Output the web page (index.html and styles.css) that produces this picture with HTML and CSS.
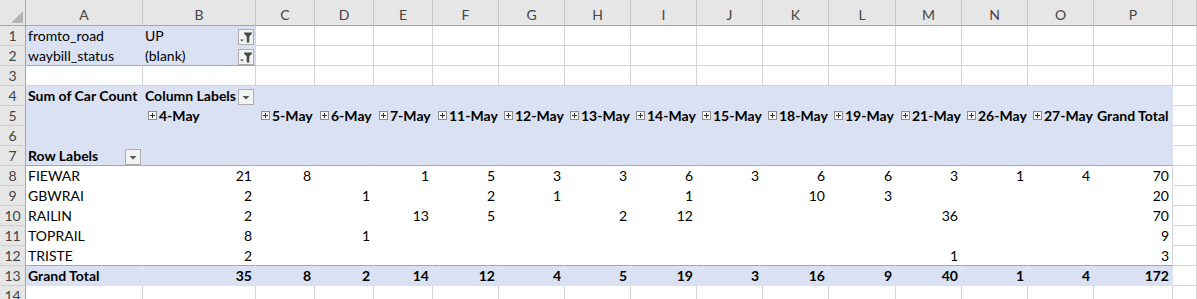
FILE: index.html
```html
<!DOCTYPE html>
<html lang="en">
<head>
    <meta charset="UTF-8">
    <title>Car Count Pivot</title>
    <link rel="stylesheet" href="styles.css">
</head>
<body>
    <table class="sheet">
        <colgroup>
            <col class="w-rh"><col class="w-a"><col class="w-b">
            <col class="w-s"><col class="w-s"><col class="w-s">
            <col class="w-m"><col class="w-m"><col class="w-m"><col class="w-m"><col class="w-m"><col class="w-m">
            <col class="w-l">
            <col class="w-m"><col class="w-m"><col class="w-m">
            <col class="w-p"><col class="w-q">
        </colgroup>
        <thead>
            <tr class="hdr">
                <th class="corner"><svg width="26" height="25" viewBox="0 0 26 25"><polygon points="23,11 23,23 11,23" fill="#b5b5b5"/></svg></th>
                <th>A</th><th>B</th><th>C</th><th>D</th><th>E</th><th>F</th><th>G</th><th>H</th>
                <th>I</th><th>J</th><th>K</th><th>L</th><th>M</th><th>N</th><th>O</th><th>P</th><th></th>
            </tr>
        </thead>
        <tbody>
            <tr>
                <td class="rh">1</td>
                <td class="pv">fromto_road</td>
                <td class="pv edge"><div class="fcell"><span>UP</span><span class="fbtn"><svg width="14" height="14" viewBox="0 0 14 14"><polygon points="1,9.5 5,9.5 3,11.5" fill="#555"/><polygon points="5,2.5 13,2.5 13,3.5 10.3,6.5 10.3,12.5 7.7,12.5 7.7,6.5 5,3.5" fill="#4a4a4a"/></svg></span></div></td>
                <td></td><td></td><td></td><td></td><td></td><td></td><td></td><td></td><td></td><td></td><td></td><td></td><td></td><td></td><td></td>
            </tr>
            <tr>
                <td class="rh">2</td>
                <td class="pv bl">waybill_status</td>
                <td class="pv bl edge"><div class="fcell"><span>(blank)</span><span class="fbtn"><svg width="14" height="14" viewBox="0 0 14 14"><polygon points="1,9.5 5,9.5 3,11.5" fill="#555"/><polygon points="5,2.5 13,2.5 13,3.5 10.3,6.5 10.3,12.5 7.7,12.5 7.7,6.5 5,3.5" fill="#4a4a4a"/></svg></span></div></td>
                <td></td><td></td><td></td><td></td><td></td><td></td><td></td><td></td><td></td><td></td><td></td><td></td><td></td><td></td><td></td>
            </tr>
            <tr>
                <td class="rh">3</td>
                <td></td><td></td><td></td><td></td><td></td><td></td><td></td><td></td><td></td><td></td><td></td><td></td><td></td><td></td><td></td><td></td><td></td>
            </tr>
            <tr>
                <td class="rh">4</td>
                <td class="pv b">Sum of Car Count</td>
                <td class="pv b"><div class="fcell"><span>Column Labels</span><span class="fbtn"><svg width="14" height="14" viewBox="0 0 14 14"><polygon points="3.5,6 10.5,6 7,9.5" fill="#555"/></svg></span></div></td>
                <td class="pv"></td><td class="pv"></td><td class="pv"></td><td class="pv"></td><td class="pv"></td><td class="pv"></td><td class="pv"></td>
                <td class="pv"></td><td class="pv"></td><td class="pv"></td><td class="pv"></td><td class="pv"></td><td class="pv"></td><td class="pv"></td>
                <td></td>
            </tr>
            <tr>
                <td class="rh">5</td>
                <td class="pv"></td>
                <td class="pv b dt"><span class="xp"></span>4-May</td>
                <td class="pv b dt"><span class="xp"></span>5-May</td>
                <td class="pv b dt"><span class="xp"></span>6-May</td>
                <td class="pv b dt"><span class="xp"></span>7-May</td>
                <td class="pv b dt"><span class="xp"></span>11-May</td>
                <td class="pv b dt"><span class="xp"></span>12-May</td>
                <td class="pv b dt"><span class="xp"></span>13-May</td>
                <td class="pv b dt"><span class="xp"></span>14-May</td>
                <td class="pv b dt"><span class="xp"></span>15-May</td>
                <td class="pv b dt"><span class="xp"></span>18-May</td>
                <td class="pv b dt"><span class="xp"></span>19-May</td>
                <td class="pv b dt"><span class="xp"></span>21-May</td>
                <td class="pv b dt"><span class="xp"></span>26-May</td>
                <td class="pv b dt"><span class="xp"></span>27-May</td>
                <td class="pv b gt">Grand Total</td>
                <td></td>
            </tr>
            <tr>
                <td class="rh">6</td>
                <td class="pv"></td><td class="pv"></td><td class="pv"></td><td class="pv"></td><td class="pv"></td><td class="pv"></td><td class="pv"></td><td class="pv"></td>
                <td class="pv"></td><td class="pv"></td><td class="pv"></td><td class="pv"></td><td class="pv"></td><td class="pv"></td><td class="pv"></td><td class="pv"></td>
                <td></td>
            </tr>
            <tr>
                <td class="rh">7</td>
                <td class="pv bl b"><div class="fcell"><span>Row Labels</span><span class="fbtn"><svg width="14" height="14" viewBox="0 0 14 14"><polygon points="3.5,6 10.5,6 7,9.5" fill="#555"/></svg></span></div></td>
                <td class="pv bl"></td><td class="pv bl"></td><td class="pv bl"></td><td class="pv bl"></td><td class="pv bl"></td><td class="pv bl"></td><td class="pv bl"></td><td class="pv bl"></td>
                <td class="pv bl"></td><td class="pv bl"></td><td class="pv bl"></td><td class="pv bl"></td><td class="pv bl"></td><td class="pv bl"></td><td class="pv bl"></td>
                <td></td>
            </tr>
            <tr>
                <td class="rh">8</td>
                <td class="pw">FIEWAR</td>
                <td class="pw n">21</td><td class="pw n">8</td><td class="pw n"></td><td class="pw n">1</td><td class="pw n">5</td><td class="pw n">3</td><td class="pw n">3</td>
                <td class="pw n">6</td><td class="pw n">3</td><td class="pw n">6</td><td class="pw n">6</td><td class="pw n">3</td><td class="pw n">1</td><td class="pw n">4</td>
                <td class="pw n edge">70</td>
                <td></td>
            </tr>
            <tr>
                <td class="rh">9</td>
                <td class="pw">GBWRAI</td>
                <td class="pw n">2</td><td class="pw n"></td><td class="pw n">1</td><td class="pw n"></td><td class="pw n">2</td><td class="pw n">1</td><td class="pw n"></td>
                <td class="pw n">1</td><td class="pw n"></td><td class="pw n">10</td><td class="pw n">3</td><td class="pw n"></td><td class="pw n"></td><td class="pw n"></td>
                <td class="pw n edge">20</td>
                <td></td>
            </tr>
            <tr>
                <td class="rh">10</td>
                <td class="pw">RAILIN</td>
                <td class="pw n">2</td><td class="pw n"></td><td class="pw n"></td><td class="pw n">13</td><td class="pw n">5</td><td class="pw n"></td><td class="pw n">2</td>
                <td class="pw n">12</td><td class="pw n"></td><td class="pw n"></td><td class="pw n"></td><td class="pw n">36</td><td class="pw n"></td><td class="pw n"></td>
                <td class="pw n edge">70</td>
                <td></td>
            </tr>
            <tr>
                <td class="rh">11</td>
                <td class="pw">TOPRAIL</td>
                <td class="pw n">8</td><td class="pw n"></td><td class="pw n">1</td><td class="pw n"></td><td class="pw n"></td><td class="pw n"></td><td class="pw n"></td>
                <td class="pw n"></td><td class="pw n"></td><td class="pw n"></td><td class="pw n"></td><td class="pw n"></td><td class="pw n"></td><td class="pw n"></td>
                <td class="pw n edge">9</td>
                <td></td>
            </tr>
            <tr>
                <td class="rh">12</td>
                <td class="pw bl">TRISTE</td>
                <td class="pw bl n">2</td><td class="pw bl n"></td><td class="pw bl n"></td><td class="pw bl n"></td><td class="pw bl n"></td><td class="pw bl n"></td><td class="pw bl n"></td>
                <td class="pw bl n"></td><td class="pw bl n"></td><td class="pw bl n"></td><td class="pw bl n"></td><td class="pw bl n">1</td><td class="pw bl n"></td><td class="pw bl n"></td>
                <td class="pw bl n edge">3</td>
                <td></td>
            </tr>
            <tr>
                <td class="rh">13</td>
                <td class="pv b">Grand Total</td>
                <td class="pv b n">35</td><td class="pv b n">8</td><td class="pv b n">2</td><td class="pv b n">14</td><td class="pv b n">12</td><td class="pv b n">4</td><td class="pv b n">5</td>
                <td class="pv b n">19</td><td class="pv b n">3</td><td class="pv b n">16</td><td class="pv b n">9</td><td class="pv b n">40</td><td class="pv b n">1</td><td class="pv b n">4</td>
                <td class="pv b n">172</td>
                <td></td>
            </tr>
            <tr>
                <td class="rh">14</td>
                <td></td><td></td><td></td><td></td><td></td><td></td><td></td><td></td><td></td><td></td><td></td><td></td><td></td><td></td><td></td><td></td><td></td>
            </tr>
        </tbody>
    </table>
</body>
</html>
```

FILE: styles.css
```css
/* Page */
html, body {
    margin: 0;
    padding: 0;
    background: #fff;
}

body {
    font-family: Lato, "Liberation Sans", sans-serif;
    font-size: 14px;
    color: #000;
}

/* Sheet grid */
.sheet {
    border-collapse: separate;
    border-spacing: 0;
    table-layout: fixed;
    width: 1197px;
}

.w-rh { width: 26px; }
.w-a { width: 117px; }
.w-b { width: 113px; }
.w-s { width: 59px; }
.w-m { width: 66px; }
.w-l { width: 67px; }
.w-p { width: 79px; }
.w-q { width: 24px; }

.sheet tr {
    height: 20px;
}

.sheet td {
    padding: 0 2px;
    line-height: 19px;
    border-right: 1px solid #d4d4d4;
    border-bottom: 1px solid #d4d4d4;
    white-space: nowrap;
    overflow: hidden;
    vertical-align: top;
}

/* Column and row headers */
.sheet tr.hdr {
    height: 26px;
}

.hdr th {
    padding: 5px 0 0;
    line-height: 20px;
    background: #e6e6e6;
    color: #444;
    font-weight: normal;
    text-align: center;
    vertical-align: top;
    border-right: 1px solid #c8c8c8;
    border-bottom: 1px solid #a6a6a6;
}

.hdr th.corner {
    padding: 0;
    border-right-color: #a6a6a6;
}

.corner svg {
    display: block;
}

.sheet td.rh {
    padding: 0;
    background: #e6e6e6;
    color: #444;
    text-align: center;
    border-right-color: #a6a6a6;
    border-bottom-color: #cfcfcf;
}

/* Pivot table areas */
.sheet td.pv {
    background: #dae1f2;
    border-color: transparent;
}

.sheet td.pw {
    border-color: transparent;
}

.sheet td.edge {
    border-right-color: #d4d4d4;
}

.sheet td.bl {
    border-bottom-color: #8ea9db;
}

.b {
    font-weight: bold;
}

.sheet td.n {
    text-align: right;
    padding-right: 3px;
}

.sheet td.dt {
    padding-left: 5px;
}

.sheet td.gt {
    padding-left: 3px;
}

/* Filter and dropdown buttons */
.fcell {
    display: flex;
    justify-content: space-between;
    align-items: flex-end;
    height: 19px;
}

.fbtn {
    width: 14px;
    height: 14px;
    margin-right: -1px;
    border: 1px solid #acacac;
    background: #f3f3f3;
    flex: none;
}

.fbtn svg {
    display: block;
}

/* Expand/collapse box before item labels */
.xp {
    display: inline-block;
    position: relative;
    width: 7px;
    height: 7px;
    margin-right: 2px;
    border: 1px solid #8c8c8c;
    background: #f7f7f7;
    vertical-align: 1px;
}

.xp::before,
.xp::after {
    content: "";
    position: absolute;
    background: #333;
}

.xp::before {
    left: 1px;
    top: 3px;
    width: 5px;
    height: 1px;
}

.xp::after {
    left: 3px;
    top: 1px;
    width: 1px;
    height: 5px;
}
```
